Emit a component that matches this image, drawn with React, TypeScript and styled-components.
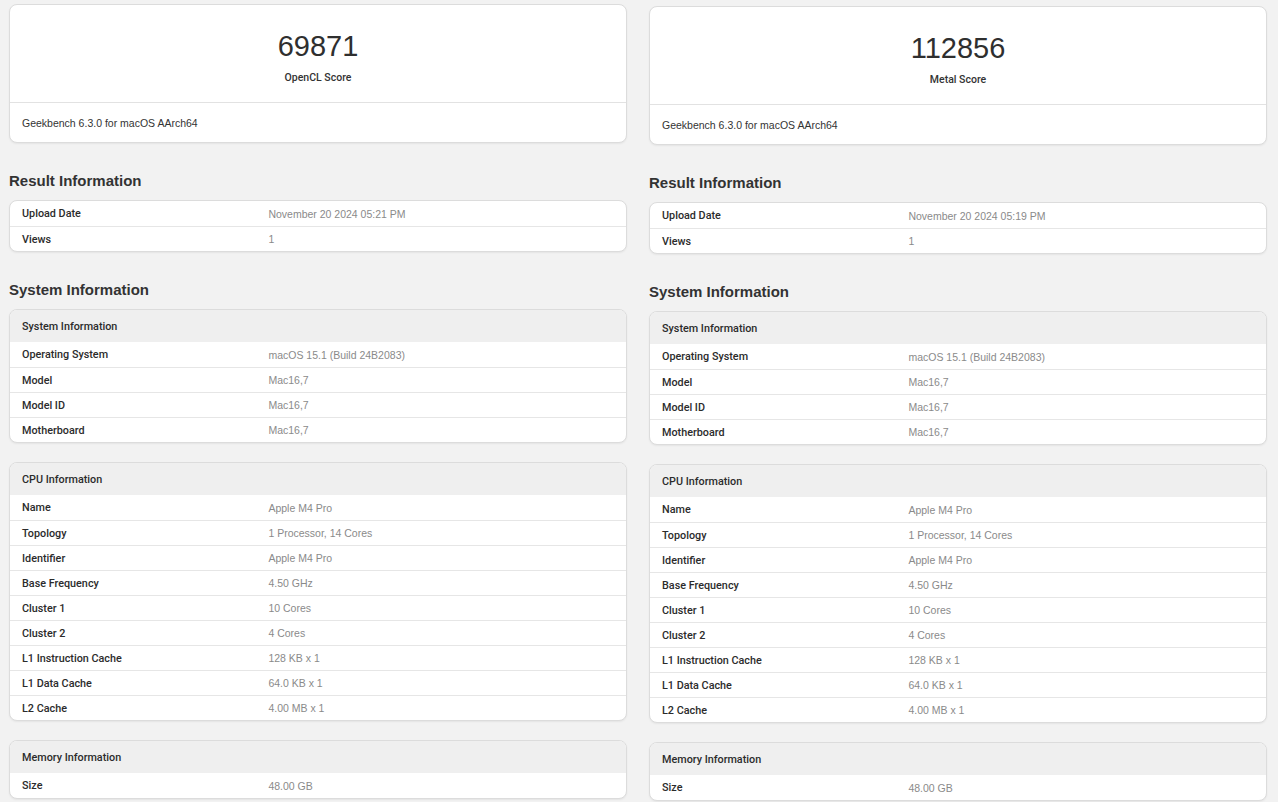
import React, { FunctionComponent } from 'react';
import styled, { createGlobalStyle } from 'styled-components';

const GlobalStyle = createGlobalStyle`
  html, body {
    margin: 0;
    padding: 0;
    background: #f2f2f2;
    font-family: "Liberation Sans", Arial, sans-serif;
    color: #2b2b2b;
  }
`;

const Page = styled.div`
  display: grid;
  grid-template-columns: 618px 618px;
  column-gap: 22px;
  padding: 4px 0 0 9px;
  width: 1278px;
  height: 802px;
  box-sizing: border-box;
  overflow: hidden;
`;

const Column = styled.div<{ $shift: number }>`
  display: flex;
  flex-direction: column;
  margin-top: ${p => p.$shift}px;
`;

const Card = styled.div`
  background: #fff;
  border: 1px solid #dcdcdc;
  border-radius: 8px;
  box-shadow: 0 1px 2px rgba(0, 0, 0, 0.06);
  overflow: hidden;
`;

const ScoreTop = styled.div`
  height: 97px;
  display: flex;
  flex-direction: column;
  align-items: center;
  border-bottom: 1px solid #e2e2e2;
`;

const ScoreValue = styled.div`
  font-size: 29px;
  line-height: 34px;
  margin-top: 24px;
  color: #2f2f2f;
`;

const ScoreLabel = styled.div`
  font-family: Roboto, "Liberation Sans", sans-serif;
  font-weight: 500;
  font-size: 10.5px;
  margin-top: 8px;
  color: #333;
`;

const ScoreFooter = styled.div`
  height: 39px;
  display: flex;
  align-items: center;
  padding: 0 12px;
  font-size: 10.5px;
  color: #333;
`;

const SectionTitle = styled.h2`
  margin: 27px 0 9px;
  font-size: 15px;
  line-height: 21px;
  font-weight: 700;
  color: #333;
`;

const Spacer = styled.div`
  height: 19px;
  flex: none;
`;

const HeadRow = styled.div`
  height: 32px;
  display: flex;
  align-items: center;
  padding: 0 12px;
  background: #efefef;
  font-family: Roboto, "Liberation Sans", sans-serif;
  font-weight: 500;
  font-size: 10.8px;
  color: #2b2b2b;
`;

const Row = styled.div`
  height: 25px;
  box-sizing: border-box;
  display: grid;
  grid-template-columns: 40% 60%;
  align-items: center;
  & + & {
    border-top: 1px solid #e6e6e6;
  }
`;

const Label = styled.div`
  padding-left: 12px;
  font-family: Roboto, "Liberation Sans", sans-serif;
  font-weight: 500;
  font-size: 10.8px;
  color: #2b2b2b;
`;

const Value = styled.div`
  padding-left: 12px;
  font-size: 10.5px;
  color: #8a8a8a;
`;

type Pair = [string, string];

interface TableProps {
  title?: string;
  rows: Pair[];
}

const InfoTable: FunctionComponent<TableProps> = ({ title, rows }) => (
  <Card>
    {title && <HeadRow>{title}</HeadRow>}
    {rows.map(([k, v]) => (
      <Row key={k}>
        <Label>{k}</Label>
        <Value>{v}</Value>
      </Row>
    ))}
  </Card>
);

const systemRows: Pair[] = [
  ['Operating System', 'macOS 15.1 (Build 24B2083)'],
  ['Model', 'Mac16,7'],
  ['Model ID', 'Mac16,7'],
  ['Motherboard', 'Mac16,7'],
];

const cpuRows: Pair[] = [
  ['Name', 'Apple M4 Pro'],
  ['Topology', '1 Processor, 14 Cores'],
  ['Identifier', 'Apple M4 Pro'],
  ['Base Frequency', '4.50 GHz'],
  ['Cluster 1', '10 Cores'],
  ['Cluster 2', '4 Cores'],
  ['L1 Instruction Cache', '128 KB x 1'],
  ['L1 Data Cache', '64.0 KB x 1'],
  ['L2 Cache', '4.00 MB x 1'],
];

const memoryRows: Pair[] = [['Size', '48.00 GB']];

interface ResultProps {
  score: string;
  kind: string;
  uploaded: string;
  shift: number;
}

const ResultColumn: FunctionComponent<ResultProps> = ({ score, kind, uploaded, shift }) => (
  <Column $shift={shift}>
    <Card>
      <ScoreTop>
        <ScoreValue>{score}</ScoreValue>
        <ScoreLabel>{kind}</ScoreLabel>
      </ScoreTop>
      <ScoreFooter>Geekbench 6.3.0 for macOS AArch64</ScoreFooter>
    </Card>

    <SectionTitle>Result Information</SectionTitle>
    <InfoTable
      rows={[
        ['Upload Date', uploaded],
        ['Views', '1'],
      ]}
    />

    <SectionTitle>System Information</SectionTitle>
    <InfoTable title="System Information" rows={systemRows} />
    <Spacer />
    <InfoTable title="CPU Information" rows={cpuRows} />
    <Spacer />
    <InfoTable title="Memory Information" rows={memoryRows} />
  </Column>
);

const App: FunctionComponent = () => (
  <>
    <GlobalStyle />
    <Page>
      <ResultColumn score="69871" kind="OpenCL Score" uploaded="November 20 2024 05:21 PM" shift={0} />
      <ResultColumn score="112856" kind="Metal Score" uploaded="November 20 2024 05:19 PM" shift={2} />
    </Page>
  </>
);

export default App;
